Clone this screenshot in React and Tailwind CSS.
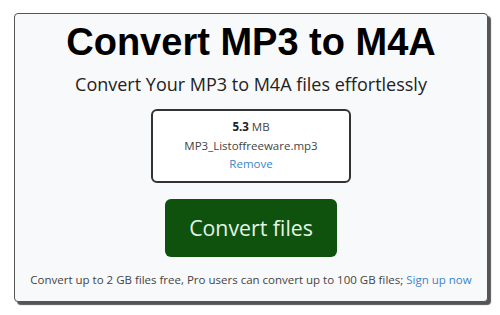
export default function App() {
  return (
    <div className="w-[500px] h-[315px] bg-white pt-[13px] pl-[14px]">
      <div className="w-[474px] h-[289px] rounded-[4px] border border-[#555] bg-[#f8f9fa] shadow-[3px_3px_1px_#555] flex flex-col items-center">
        <h1 className="mt-[6px] text-[38px] leading-[44px] font-bold text-black font-['Liberation_Sans',Arial,sans-serif]">
          Convert MP3 to M4A
        </h1>
        <p className="mt-[8px] text-[18px] leading-[24px] text-[#222] font-['Open_Sans','Noto_Sans',sans-serif]">
          Convert Your MP3 to M4A files effortlessly
        </p>
        <div className="mt-[13px] w-[200px] h-[74px] rounded-[6px] border-2 border-[#333] bg-white flex flex-col items-center justify-center font-['Open_Sans','Noto_Sans',sans-serif] text-[11.5px] leading-[18.5px] text-[#444]">
          <div>
            <span className="font-bold text-[#222]">5.3</span> MB
          </div>
          <div>MP3_Listoffreeware.mp3</div>
          <div className="text-[#3a86c8]">Remove</div>
        </div>
        <button className="mt-[16px] w-[172px] h-[58px] rounded-[6px] bg-[#0e520e] text-[#e4f5e4] text-[21.3px] font-['Open_Sans','Noto_Sans',sans-serif]">
          Convert files
        </button>
        <p className="mt-[14px] text-[11.5px] leading-[18px] text-[#444] font-['Open_Sans','Noto_Sans',sans-serif]">
          Convert up to 2 GB files free, Pro users can convert up to 100 GB files;{" "}
          <span className="text-[#3a86c8]">Sign up now</span>
        </p>
      </div>
    </div>
  );
}
